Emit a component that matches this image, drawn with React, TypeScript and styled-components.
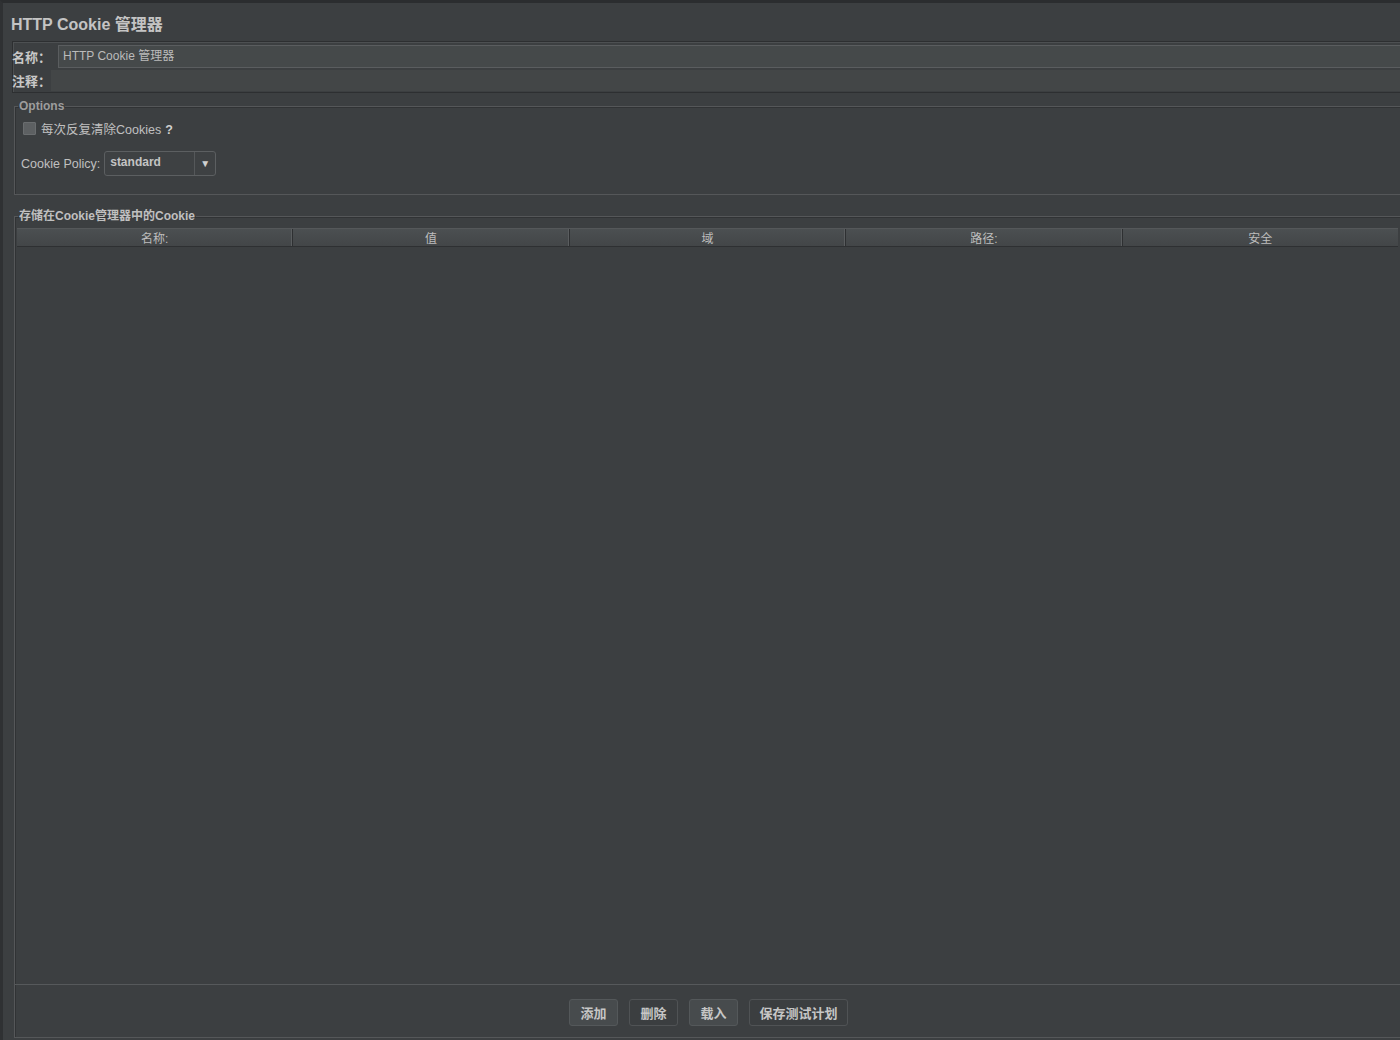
import { createGlobalStyle, styled } from "styled-components";

const GlobalStyle = createGlobalStyle`
   html, body {
      margin: 0;
      padding: 0;
      background: #3c3f41;
      overflow: hidden;
   }
   body {
      font-family: "Liberation Sans", "Noto Sans CJK SC", sans-serif;
      color: #bbbbbb;
   }
`;

const FONT = `"Liberation Sans", "Noto Sans CJK SC", sans-serif`;

const Page = styled.div`
   box-sizing: border-box;
   width: 1400px;
   height: 1040px;
   display: flex;
   flex-direction: column;
   border-top: 3px solid #2b2d2f;
   border-left: 3px solid #2f3133;
   padding: 0 0 2px 9px;
   background: #3c3f41;
`;

const Title = styled.div`
   height: 38px;
   box-sizing: border-box;
   padding-top: 12px;
   margin-left: -1px;
   font-size: 16px;
   line-height: 20px;
   font-weight: bold;
   color: #c4c4c4;
`;

const NamePanel = styled.div`
   display: flex;
   flex-direction: column;
   margin-right: -4px;
   border-top: 1px solid #2d2f31;
   border-left: 1px solid #2d2f31;
   box-shadow: inset 1px 1px 0 #4d5052;
   border-bottom: 1px solid #2d2f31;
   padding: 2px 0 0 0;
`;

const FieldRow = styled.div<{ $labelWidth: number }>`
   display: grid;
   grid-template-columns: ${({ $labelWidth }) => $labelWidth}px 1fr;
   align-items: center;
   height: ${({ $labelWidth }) => ($labelWidth > 40 ? 25 : 23)}px;
`;

const FieldLabel = styled.span`
   font-size: 13px;
   font-weight: bold;
   color: #c8c8c8;
   margin-left: -1px;
`;

const TextField = styled.div<{ $bordered: boolean }>`
   box-sizing: border-box;
   height: ${({ $bordered }) => ($bordered ? 23 : 21)}px;
   background: ${({ $bordered }) => ($bordered ? "#45494a" : "#434647")};
   border: ${({ $bordered }) => ($bordered ? "1px solid #5a5d5f" : "none")};
   border-right: none;
   font-size: 12px;
   line-height: 21px;
   padding-left: 4px;
   color: #bbbbbb;
`;

const Group = styled.fieldset<{ $grow?: boolean }>`
   margin: ${({ $grow }) => ($grow ? "14px" : "6px")} -3px 0 2px;
   padding: ${({ $grow }) => ($grow ? "5px 4px 0 2px" : "5px 0 18px 2px")};
   border: 1px solid #555759;
   box-shadow: inset 1px 1px 0 #313335;
   min-width: 0;
   display: flex;
   flex-direction: column;
   ${({ $grow }) => $grow && "flex: 1; min-height: 0;"}
`;

const Legend = styled.legend<{ $bright?: boolean }>`
   margin-left: 1px;
   padding: 0 1px;
   font-size: 12px;
   line-height: 14px;
   font-weight: bold;
   color: ${({ $bright }) => ($bright ? "#c0c0c0" : "#9d9d9d")};
`;

const OptionsBody = styled.div`
   display: flex;
   flex-direction: column;
   padding-left: 5px;
`;

const CheckRow = styled.label`
   display: flex;
   align-items: center;
   gap: 5px;
   height: 20px;
   font-size: 12.5px;
   color: #c0c0c0;
   padding-left: 1px;
`;

const CheckBox = styled.span`
   width: 11px;
   height: 11px;
   border: 1px solid #6a6d6f;
   background: #5d6062;
   border-radius: 1px;
`;

const HelpMark = styled.b`
   margin-left: 4px;
   color: #d0d0d0;
`;

const PolicyRow = styled.div`
   display: flex;
   align-items: center;
   gap: 4px;
   margin: 13px 0 0 -1px;
   font-size: 12.5px;
   color: #c0c0c0;
`;

const Combo = styled.div`
   box-sizing: border-box;
   width: 112px;
   height: 25px;
   display: flex;
   border: 1px solid #5c5f61;
   border-radius: 3px;
   background: #3e4143;
`;

const ComboValue = styled.span`
   flex: 1;
   padding: 3px 0 0 5px;
   font-size: 12px;
   font-weight: bold;
   color: #c4c4c4;
`;

const ComboArrow = styled.span`
   width: 20px;
   display: flex;
   align-items: center;
   justify-content: center;
   border-left: 1px solid #55585a;
   color: #d0d0d0;
   font-size: 10px;
`;

const TableHead = styled.div`
   display: flex;
   height: 17px;
   background: linear-gradient(#4b4f51, #434648);
   border-top: 1px solid #55585a;
   border-bottom: 1px solid #2e3032;
`;

const HeadCell = styled.div`
   flex: 1;
   display: flex;
   align-items: center;
   justify-content: center;
   font-size: 12px;
   color: #bdbdbd;
   border-right: 1px solid #2e3032;
   box-shadow: inset -1px 0 0 #5a5d5f;
   &:last-child {
      border-right: none;
      box-shadow: none;
   }
`;

const TableBody = styled.div`
   flex: 1;
   background: #3c3f41;
`;

const ButtonBar = styled.div`
   display: flex;
   justify-content: center;
   gap: 11px;
   padding: 14px 0 11px;
   border-top: 1px solid #56595b;
   margin: 0 -4px 0 -2px;
`;

const ActionButton = styled.button<{ $raised: boolean; $width: number }>`
   box-sizing: border-box;
   width: ${({ $width }) => $width}px;
   height: 27px;
   border-radius: 3px;
   border: 1px solid ${({ $raised }) => ($raised ? "#54585a" : "#505355")};
   background: ${({ $raised }) => ($raised ? "#474b4d" : "#3b3e40")};
   font-family: ${FONT};
   font-size: 13px;
   font-weight: bold;
   color: #c6c6c6;
   padding: 0;
`;

const columns = ["名称:", "值", "域", "路径:", "安全"];

const buttons = [
   { text: "添加", raised: true, width: 49 },
   { text: "删除", raised: false, width: 49 },
   { text: "载入", raised: true, width: 49 },
   { text: "保存测试计划", raised: false, width: 99 },
];

export default function App() {
   return (
      <>
         <GlobalStyle />
         <Page>
            <Title>HTTP Cookie 管理器</Title>

            <NamePanel>
               <FieldRow $labelWidth={45}>
                  <FieldLabel>名称：</FieldLabel>
                  <TextField $bordered={true}>HTTP Cookie 管理器</TextField>
               </FieldRow>
               <FieldRow $labelWidth={38}>
                  <FieldLabel>注释：</FieldLabel>
                  <TextField $bordered={false} />
               </FieldRow>
            </NamePanel>

            <Group>
               <Legend>Options</Legend>
               <OptionsBody>
                  <CheckRow>
                     <CheckBox />
                     <span>每次反复清除Cookies<HelpMark>?</HelpMark></span>
                  </CheckRow>
                  <PolicyRow>
                     Cookie Policy:
                     <Combo>
                        <ComboValue>standard</ComboValue>
                        <ComboArrow>▼</ComboArrow>
                     </Combo>
                  </PolicyRow>
               </OptionsBody>
            </Group>

            <Group $grow>
               <Legend $bright>存储在Cookie管理器中的Cookie</Legend>
               <TableHead>
                  {columns.map(c => <HeadCell key={c}>{c}</HeadCell>)}
               </TableHead>
               <TableBody />
               <ButtonBar>
                  {buttons.map(b => (
                     <ActionButton key={b.text} $raised={b.raised} $width={b.width}>{b.text}</ActionButton>
                  ))}
               </ButtonBar>
            </Group>
         </Page>
      </>
   );
}
